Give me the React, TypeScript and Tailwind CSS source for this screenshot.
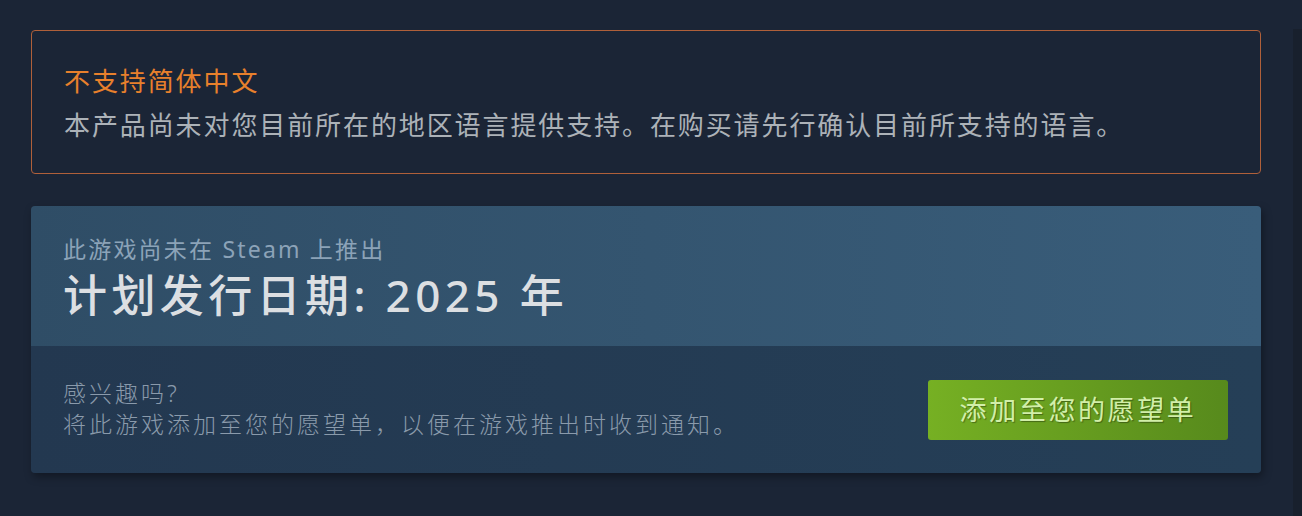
import React from "react";

const font = "font-['Noto_Sans','Noto_Sans_CJK_SC',sans-serif]";

const App: React.FC = () => {
  return (
    <div className={`flex min-h-[516px] w-full bg-[#1b2536] ${font}`}>
      <div className="flex w-[1293px] flex-col gap-[32px] pl-[31px] pr-[32px] pt-[30px]">
        {/* Language warning */}
        <div className="rounded-[4px] border border-[#b0603a] px-[32px] pt-[28px] pb-[26px]">
          <div className="text-[26px] leading-[44px] tracking-[1.9px] text-[#e8802c]">不支持简体中文</div>
          <div className="text-[26px] leading-[44px] tracking-[1.9px] text-[#acb2b8]">
            本产品尚未对您目前所在的地区语言提供支持。在购买请先行确认目前所支持的语言。
          </div>
        </div>

        {/* Release info */}
        <div className="overflow-hidden rounded-[4px] shadow-[2px_4px_8px_rgba(0,0,0,0.35)]">
          <div className="bg-gradient-to-r from-[#2f4d66] to-[#395d7a] px-[32px] pt-[27px] pb-[21px]">
            <div className="text-[23px] leading-[32px] tracking-[2.2px] text-[#8ca3b8]">此游戏尚未在 Steam 上推出</div>
            <div className="text-[44px] font-medium leading-[60px] tracking-[4.4px] text-[#dcdfe2]">计划发行日期: 2025 年</div>
          </div>
          <div className="flex items-center justify-between bg-gradient-to-r from-[#233850] to-[#253f57] pl-[32px] pr-[33px] pt-[32px] pb-[33px]">
            <div className="text-[23px] font-light leading-[31px] tracking-[3px] text-[#8a9aab]">
              <div>感兴趣吗?</div>
              <div>将此游戏添加至您的愿望单，以便在游戏推出时收到通知。</div>
            </div>
            <button className="mt-[2px] flex h-[60px] w-[300px] items-center justify-center rounded-[3px] bg-gradient-to-r from-[#76b023] to-[#578a1c] text-[27px] tracking-[2.6px] text-[#d2efa9] [text-shadow:1px_1px_1px_rgba(0,0,0,0.35)]">
              添加至您的愿望单
            </button>
          </div>
        </div>
      </div>
      <div className="mt-[29px] flex-1 bg-[#18202d]" />
    </div>
  );
};

export default App;
